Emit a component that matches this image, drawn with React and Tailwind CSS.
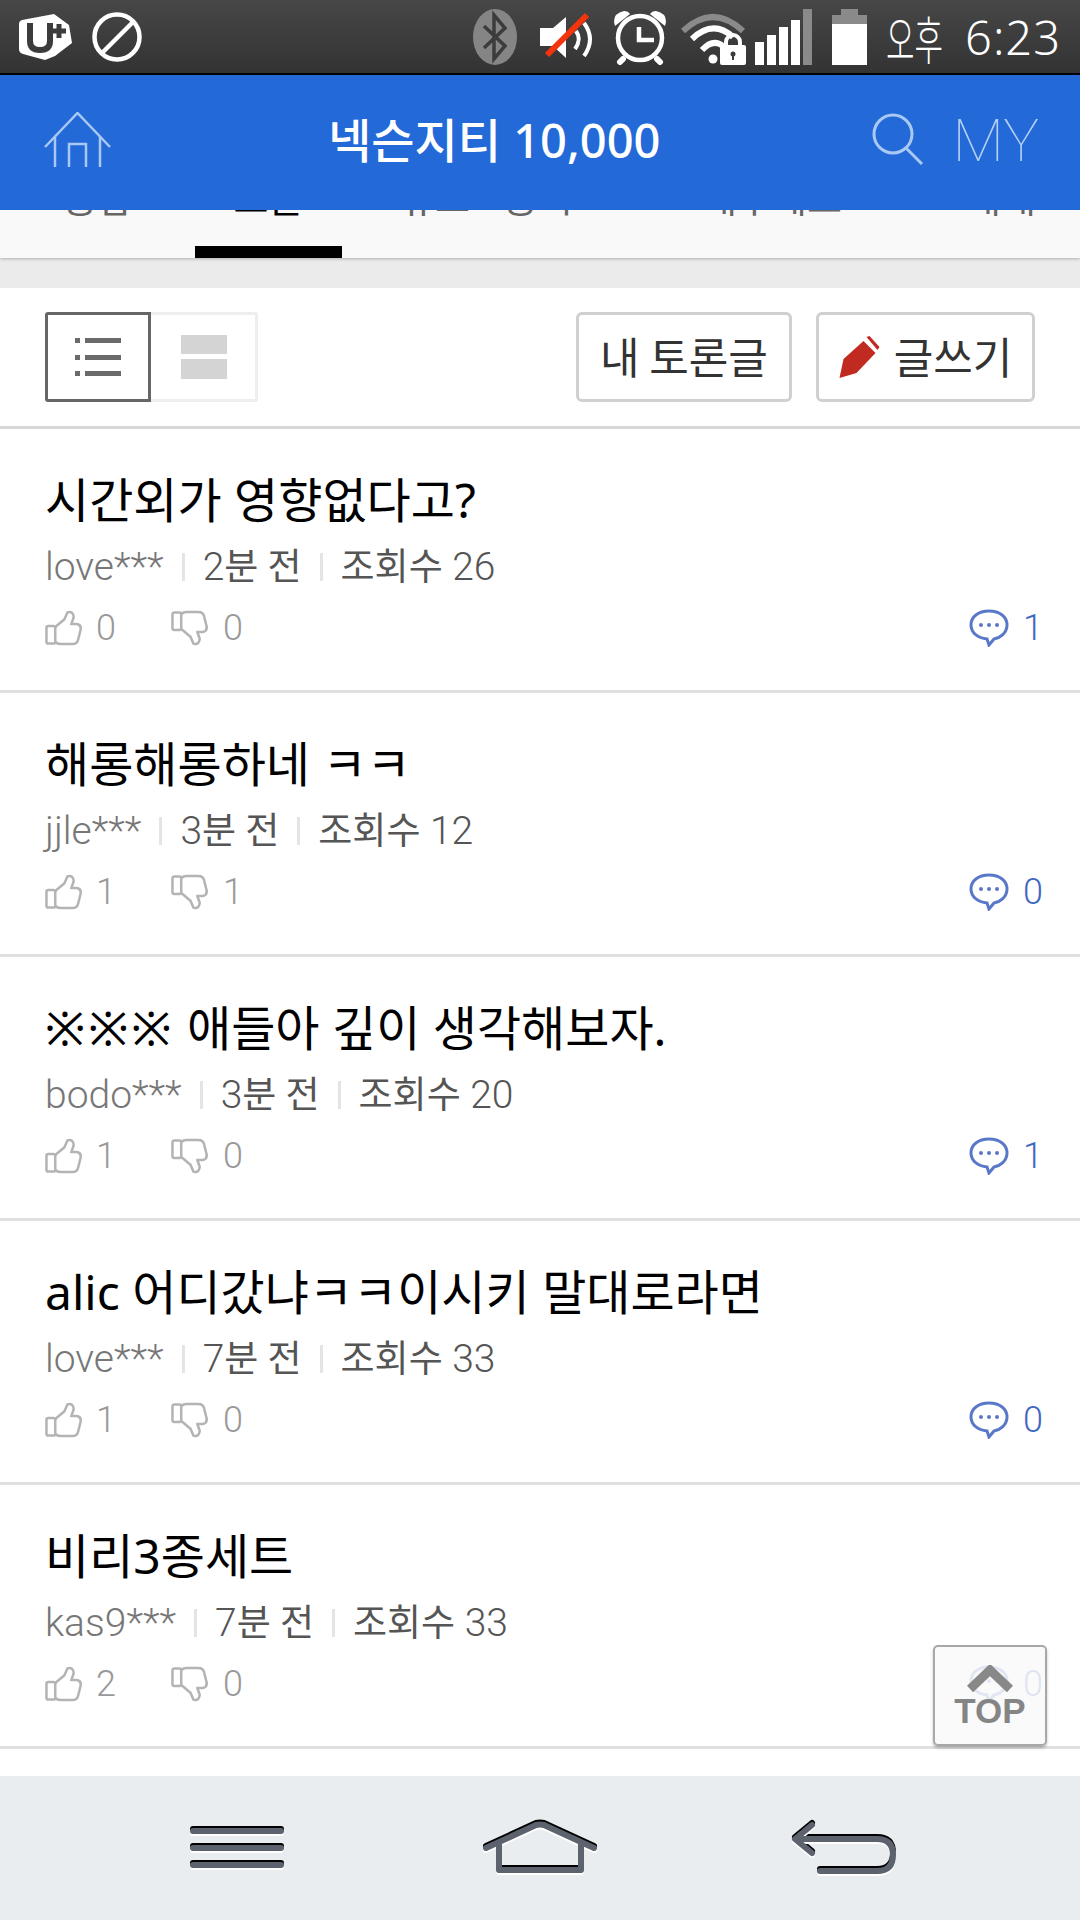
const POSTS = [
  { title: '시간외가 영향없다고?', user: 'love***', num: 2, time: '분 전', views: 26, up: 0, down: 0, comments: 1 },
  { title: '해롱해롱하네 ㅋㅋ', user: 'jjle***', num: 3, time: '분 전', views: 12, up: 1, down: 1, comments: 0 },
  { title: <><span className="tracking-[3px]">※※※</span> 애들아 깊이 생각해보자.</>, user: 'bodo***', num: 3, time: '분 전', views: 20, up: 1, down: 0, comments: 1 },
  { title: 'alic 어디갔냐ㅋㅋ이시키 말대로라면', user: 'love***', num: 7, time: '분 전', views: 33, up: 1, down: 0, comments: 0 },
  { title: '비리3종세트', user: 'kas9***', num: 7, time: '분 전', views: 33, up: 2, down: 0, comments: 0 },
]

// 탭 글자는 헤더 아래로 대부분 가려진다
const TABS = [
  { label: '종합', cls: 'w-[195px] text-center text-[#666]' },
  { label: '토론', cls: 'w-[147px] text-center text-black', active: true },
  { label: '뉴스', cls: 'w-[161px] pl-[58px] text-[#666]' },
  { label: '공시', cls: 'w-[199px] text-[#666]' },
  { label: '재무제표', cls: 'w-[264px] text-[#666]' },
  { label: '매매', cls: 'flex-1 text-[#666]' },
]

function StatusIcons() {
  return (
    <div className="flex items-center h-full">
      {/* 블루투스 */}
      <svg width="44" height="56" viewBox="0 0 44 56" className="ml-[473px]">
        <ellipse cx="22" cy="28" rx="22" ry="28" fill="#858585" />
        <path d="M11 17 L32 37 L21 50 V6 L32 19 L11 39" fill="none" stroke="#3c3c3c" strokeWidth="3.5" />
      </svg>
      {/* 무음 */}
      <svg width="56" height="56" viewBox="0 0 56 56" className="ml-[23px]">
        <path d="M0 19 H13 L26 8 V49 L13 37 H0 Z" fill="#fff" />
        <path d="M36 22 Q42 30 35 40" fill="none" stroke="#fff" strokeWidth="4" />
        <path d="M44 14 Q56 30 44 47" fill="none" stroke="#fff" strokeWidth="4" />
        <path d="M7 46 L47 6" stroke="#f4340c" strokeWidth="6" />
      </svg>
      {/* 알람 */}
      <svg width="56" height="56" viewBox="0 0 56 56" className="ml-[16px]">
        <circle cx="28" cy="29" r="22" fill="none" stroke="#fff" strokeWidth="4.5" />
        <path d="M27 18 V31 H42" fill="none" stroke="#fff" strokeWidth="4.5" />
        <path d="M3 17 Q-1 5 12 2 Q16 2 18 5 Z" fill="#fff" />
        <path d="M53 17 Q57 5 44 2 Q40 2 38 5 Z" fill="#fff" />
        <path d="M11 50 L8 53 M45 50 L48 53" stroke="#fff" strokeWidth="6" strokeLinecap="round" />
      </svg>
      {/* 와이파이 + 자물쇠 */}
      <svg width="66" height="56" viewBox="0 0 66 56" className="ml-[13px]">
        <path d="M2 22 Q32 -6 62 22" fill="none" stroke="#8a8a8a" strokeWidth="6" />
        <path d="M11 30 Q32 10 52 28" fill="none" stroke="#fff" strokeWidth="6" />
        <path d="M21 41 Q32 29 42 37" fill="none" stroke="#fff" strokeWidth="6" />
        <circle cx="32" cy="50" r="4.5" fill="#fff" />
        <rect x="39" y="36" width="26" height="20" rx="2" fill="#fff" />
        <path d="M45 37 V33 A7 7 0 0 1 59 33 V37" fill="none" stroke="#fff" strokeWidth="4" />
        <circle cx="52" cy="45" r="2.5" fill="#3c3c3c" />
        <rect x="51" y="45" width="2" height="6" fill="#3c3c3c" />
      </svg>
      {/* 신호 */}
      <svg width="58" height="56" viewBox="0 0 58 56" className="ml-[8px]">
        <rect x="0" y="33" width="9" height="23" fill="#fff" />
        <rect x="12" y="26" width="9" height="30" fill="#fff" />
        <rect x="24" y="18" width="9" height="38" fill="#fff" />
        <rect x="36" y="11" width="9" height="45" fill="#fff" />
        <rect x="48" y="0" width="9" height="56" fill="#8a8a8a" />
      </svg>
      {/* 배터리 */}
      <svg width="35" height="56" viewBox="0 0 35 56" className="ml-[19px]">
        <path d="M9 0 H26 V6 H35 V15 H0 V6 H9 Z" fill="#8a8a8a" />
        <rect x="0" y="15" width="35" height="41" fill="#fff" />
      </svg>
      <span className="ml-[19px] inline-block scale-y-[1.7] text-[31px] font-light leading-none text-white font-['Noto_Sans_CJK_KR',sans-serif]">오후</span>
      <span className="ml-[22px] text-[47px] font-light leading-none tracking-[1px] text-white font-['Noto_Sans',sans-serif]">6:23</span>
    </div>
  )
}

function ULogo() {
  return (
    <svg width="53" height="46" viewBox="0 0 53 46" className="shrink-0">
      <path d="M3 6 L35 0 L50 11 L53 29 L36 42 L26 46 L4 40 Q0 39 0 35 V10 Q0 7 3 6 Z" fill="#fff" />
      <path d="M11 9 V27 Q11 36 21 36 Q31 36 31 27 V9" fill="none" stroke="#3c3c3c" strokeWidth="6" />
      <path d="M40 10 V24 M34 17 H47" stroke="#3c3c3c" strokeWidth="5" />
    </svg>
  )
}

function Header() {
  return (
    <div className="relative z-10 flex h-[135px] shrink-0 items-center bg-[#236ad8] pl-[44px] pr-[41px]">
      <svg width="67" height="55" viewBox="0 0 67 55" className="mb-[6px] shrink-0" fill="none" stroke="#a9c8f3" strokeWidth="2.5">
        <path d="M1 35 L33.5 1 L66 35" />
        <path d="M11 25 V55 M56 25 V55" />
        <path d="M25 55 V32 H42 V55" />
      </svg>
      <div className="mb-[4px] flex-1 pl-[6px] text-center text-[47px] font-medium text-white font-['Noto_Sans','Noto_Sans_CJK_KR',sans-serif]">
        넥슨지티 10,000
      </div>
      <svg width="52" height="52" viewBox="0 0 52 52" className="mb-[7px] shrink-0" fill="none" stroke="#a9c8f3" strokeWidth="3">
        <circle cx="21" cy="21" r="19" />
        <path d="M34 35 L50 51" />
      </svg>
      <span className="mb-[4px] ml-[29px] text-[60px] font-thin leading-none text-[#b5d0f5] font-['Roboto',sans-serif]">MY</span>
    </div>
  )
}

function Toolbar() {
  return (
    <div className="flex h-[141px] shrink-0 items-start border-b-[3px] border-[#d8d8d8] bg-white pl-[45px] pt-[24px]">
      <div className="flex h-[90px]">
        <div className="flex w-[106px] items-center justify-center rounded-l-[3px] border-[3px] border-[#666]">
          <svg width="46" height="38" viewBox="0 0 46 38" fill="#6a6a6a">
            <rect x="0" y="0" width="5" height="5" /><rect x="10" y="0" width="36" height="5" />
            <rect x="0" y="17" width="5" height="5" /><rect x="10" y="17" width="36" height="5" />
            <rect x="0" y="33" width="5" height="5" /><rect x="10" y="33" width="36" height="5" />
          </svg>
        </div>
        <div className="flex w-[107px] items-center justify-center rounded-r-[3px] border-[3px] border-l-0 border-[#eeeeee] pl-[2px]">
          <svg width="46" height="44" viewBox="0 0 46 44" fill="#d4d4d4">
            <rect x="0" y="0" width="46" height="19" />
            <rect x="0" y="24" width="46" height="20" />
          </svg>
        </div>
      </div>
      <div className="ml-auto mr-[45px] flex gap-[24px] text-[43px] text-[#333] font-['Noto_Sans_CJK_KR',sans-serif]">
        <button className="flex h-[90px] w-[216px] items-center justify-center rounded-[6px] border-[3px] border-[#d0d0d0] pb-[4px]">
          내 토론글
        </button>
        <button className="flex h-[90px] w-[219px] items-center justify-center gap-[14px] rounded-[6px] border-[3px] border-[#d0d0d0] pb-[4px]">
          <svg width="41" height="42" viewBox="0 0 40 42" fill="#c02a20" className="mt-[4px]">
            <path d="M0 42 L4 23 L24 5 L36 17 L17 37 Z" />
            <path d="M27 1 L30 0 L40 11 L38 14 Z" />
          </svg>
          글쓰기
        </button>
      </div>
    </div>
  )
}

function ThumbIcon({ flip }) {
  return (
    <svg width="37" height="36" viewBox="0 0 38 36" fill="none" stroke="#b4b4b4" strokeWidth="2.6" strokeLinejoin="round" className={flip ? '-scale-y-100 shrink-0' : 'shrink-0'}>
      <rect x="1.5" y="16" width="9" height="18" rx="2" />
      <path d="M10.5 17 L20 9 L23 2 Q29 0 29.5 7 L27 14 H33 Q37.5 15 36.5 20 L34 30 Q33 34.5 28 34.5 H16 Q12 34.5 10.5 32" />
    </svg>
  )
}

function CommentIcon() {
  return (
    <svg width="40" height="38" viewBox="0 0 40 38" fill="none" className="shrink-0">
      <path d="M20 2 C31 2 38 8 38 16 C38 24 31 29 25 30 L20 36 L18 30 C9 29 2 24 2 16 C2 8 9 2 20 2 Z" stroke="#5a78c8" strokeWidth="3" />
      <circle cx="12" cy="16" r="2" fill="#5a78c8" />
      <circle cx="20" cy="16" r="2" fill="#5a78c8" />
      <circle cx="28" cy="16" r="2" fill="#5a78c8" />
    </svg>
  )
}

function PostRow({ post }) {
  return (
    <div className="h-[264px] shrink-0 border-b-[3px] border-[#e0e0e0] pl-[45px] pr-[37px] pt-[41px]">
      <div className="h-[60px] text-[48px] leading-[60px] text-black font-['Noto_Sans','Noto_Sans_CJK_KR',sans-serif]">
        {post.title}
      </div>
      <div className="mt-[15px] flex h-[44px] items-center gap-[18px] text-[39px] font-light leading-[44px] text-[#666] font-['Roboto','Noto_Sans_CJK_KR',sans-serif]">
        <span className="text-[#777]">{post.user}</span>
        <span className="h-[28px] w-[3px] bg-[#e4e4e4]" />
        <span className="text-[#555]">
          {post.num}
          <span className="text-[37px] font-normal">{post.time}</span>
        </span>
        <span className="h-[28px] w-[3px] bg-[#e4e4e4]" />
        <span className="text-[#555]">
          <span className="text-[37px] font-normal">조회수</span> {post.views}
        </span>
      </div>
      <div className="mt-[19px] flex h-[40px] items-center text-[36px] font-light text-[#999] font-['Roboto',sans-serif]">
        <div className="flex w-[126px] items-center gap-[14px]">
          <ThumbIcon />
          <span>{post.up}</span>
        </div>
        <div className="flex items-center gap-[15px]">
          <ThumbIcon flip />
          <span>{post.down}</span>
        </div>
        <div className="ml-auto flex items-center gap-[14px] text-[#3f68c0]">
          <CommentIcon />
          <span>{post.comments}</span>
        </div>
      </div>
    </div>
  )
}

function NavIcon({ width, height, children }) {
  // 검은 윗 그림자, 흰 아랫 그림자를 겹쳐 그린다
  const layers = [
    { dy: -2, color: '#000' },
    { dy: 2, color: '#fff' },
    { dy: 0, color: '#5c626e' },
  ]
  return (
    <svg width={width} height={height} viewBox={`0 0 ${width} ${height}`} fill="none" strokeLinecap="round" strokeLinejoin="round" strokeWidth="6" className="shrink-0 overflow-visible">
      {layers.map((l) => (
        <g key={l.dy} transform={`translate(0 ${l.dy})`} stroke={l.color}>
          {children}
        </g>
      ))}
    </svg>
  )
}

function BottomNav() {
  return (
    <div className="flex h-[144px] shrink-0 items-center bg-[#e9edf0] pl-[190px]">
      <NavIcon width={94} height={44}>
        <path d="M3 5 H91 M3 22 H91 M3 39 H91" />
      </NavIcon>
      <div className="ml-[199px]">
        <NavIcon width={114} height={50}>
          <path d="M3 25 L53 2 Q57 1 61 2 L111 25" />
          <path d="M16 22 V47 H98 V22" />
        </NavIcon>
      </div>
      <div className="ml-[195px]">
        <NavIcon width={104} height={52}>
          <path d="M20 3 L3 17 L20 31" />
          <path d="M5 17 H85 Q101 17 101 33 Q101 49 85 49 H28" />
        </NavIcon>
      </div>
    </div>
  )
}

export default function App() {
  return (
    <div className="relative flex h-[1920px] w-[1080px] flex-col overflow-hidden bg-white">
      {/* 상태바 */}
      <div className="flex h-[75px] shrink-0 items-center border-b-[2px] border-black bg-gradient-to-b from-[#474747] to-[#333] pl-[19px]">
        <ULogo />
        <svg width="50" height="50" viewBox="0 0 50 50" className="ml-[20px] shrink-0" fill="none" stroke="#fff" strokeWidth="4.5">
          <circle cx="25" cy="25" r="22.5" />
          <path d="M10 41 L41 10" />
        </svg>
        <div className="absolute left-0 top-[9px] h-[56px]">
          <StatusIcons />
        </div>
      </div>

      <Header />

      {/* 탭 */}
      <div className="relative flex h-[48px] shrink-0 bg-[#f9f9f9] text-[38px] shadow-[0_1px_3px_rgba(0,0,0,0.25)] font-['Noto_Sans_CJK_KR',sans-serif]">
        {TABS.map((tab) => (
          <div key={tab.label} className={`h-[48px] overflow-hidden ${tab.cls} ${tab.active ? 'border-b-[12px] border-black' : ''}`}>
            <div className="-mt-[33px] leading-[38px]">{tab.label}</div>
          </div>
        ))}
      </div>
      <div className="h-[30px] shrink-0 bg-[#ebebeb] shadow-[0_1px_2px_rgba(0,0,0,0.2)]" />

      <Toolbar />

      <div className="flex-1 overflow-hidden">
        {POSTS.map((post, idx) => (
          <PostRow key={idx} post={post} />
        ))}
      </div>

      <BottomNav />

      {/* TOP 버튼 */}
      <div className="absolute left-[933px] top-[1645px] flex h-[101px] w-[114px] flex-col items-center rounded-[5px] border-[2px] border-[#a8a8a8] bg-[#f9f9f9]/85 pt-[18px] shadow-[0_2px_3px_rgba(0,0,0,0.25)]">
        <svg width="46" height="27" viewBox="0 0 46 27" fill="none" stroke="#888" strokeWidth="9">
          <path d="M3 24 L23 5 L43 24" />
        </svg>
        <span className="mt-[2px] text-[35px] font-bold leading-[34px] text-[#858585] font-['Liberation_Sans',sans-serif]">TOP</span>
      </div>
    </div>
  )
}
